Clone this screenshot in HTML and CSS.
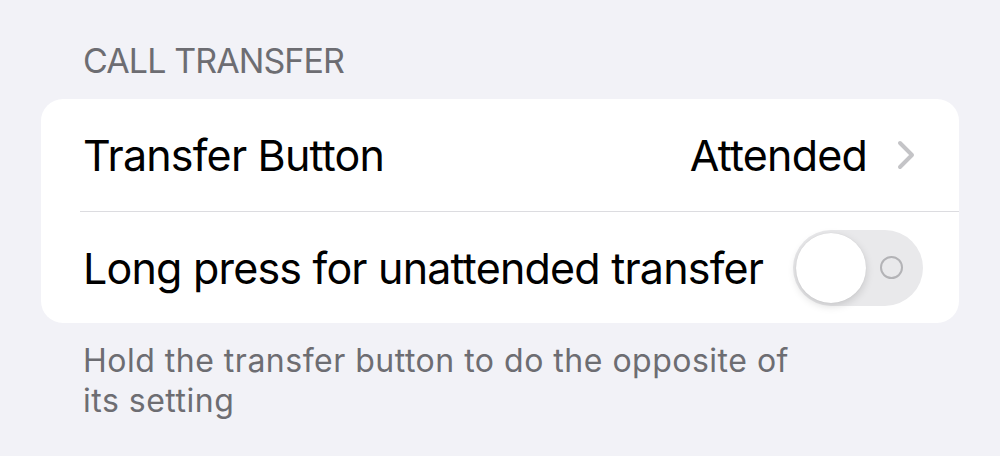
FILE: index.html
```html
<!DOCTYPE html>
<html lang="en">

<head>
    <meta charset="UTF-8">
    <meta name="viewport" content="width=device-width, initial-scale=1.0">
    <title>Call Transfer</title>
    <link rel="stylesheet" href="styles.css">
</head>

<body>
    <section class="settings">
        <div class="group-title">CALL TRANSFER</div>
        <div class="card">
            <div class="row">
                <span class="label">Transfer Button</span>
                <span class="value">
                    Attended
                    <svg class="chevron" width="18" height="30" viewBox="0 0 18 30">
                        <path d="M3 3 L15 15 L3 27" fill="none" stroke="#c4c4c7" stroke-width="4" stroke-linecap="round" stroke-linejoin="round"/>
                    </svg>
                </span>
            </div>
            <div class="row">
                <span class="label">Long press for unattended transfer</span>
                <div class="toggle">
                    <div class="knob"></div>
                    <span class="ring"></span>
                </div>
            </div>
        </div>
        <p class="footer">Hold the transfer button to do the opposite of<br>its setting</p>
    </section>
</body>

</html>
```

FILE: styles.css
```css
body {
    margin: 0;
    background-color: #f2f2f7;
    font-family: Inter, "Noto Sans", sans-serif;
    color: #000;
}

.settings {
    padding: 43px 41px 0 41px;
}

.group-title {
    padding-left: 42px;
    font-size: 34px;
    letter-spacing: -0.9px;
    color: #6d6d72;
    line-height: 36px;
    height: 56px;
}

.card {
    background-color: #fff;
    border-radius: 22px;
    overflow: hidden;
}

.row {
    display: flex;
    align-items: center;
    justify-content: space-between;
    height: 112px;
    margin-left: 39px;
    padding-left: 3px;
    padding-right: 36px;
    box-sizing: border-box;
    font-size: 43px;
    letter-spacing: -0.8px;
}

.row + .row {
    border-top: 1px solid #dcdce0;
}

.value {
    display: flex;
    align-items: center;
    gap: 30px;
    padding-right: 8px;
}

.toggle {
    width: 130px;
    height: 76px;
    border-radius: 38px;
    background-color: #e9e9eb;
    display: flex;
    align-items: center;
    padding: 3px;
    box-sizing: border-box;
}

.knob {
    width: 70px;
    height: 70px;
    border-radius: 50%;
    background-color: #fff;
    box-shadow: 0 3px 8px rgba(0, 0, 0, 0.15), 0 0 1px rgba(0, 0, 0, 0.1);
}

.ring {
    width: 19px;
    height: 19px;
    border: 2.5px solid #b3b3b6;
    border-radius: 50%;
    margin-left: 14px;
}

.footer {
    margin: 18px 0 0 42px;
    font-size: 32px;
    letter-spacing: 0.5px;
    line-height: 40px;
    color: #6d6d72;
}
```
